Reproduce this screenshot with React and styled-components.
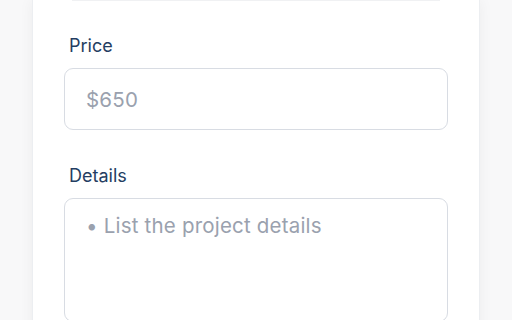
import React from 'react';
import styled, { createGlobalStyle } from 'styled-components';

const GlobalStyle = createGlobalStyle`
    html, body {
        margin: 0;
        padding: 0;
        background: #f8f8f9;
        font-family: Inter, "Noto Sans", "Liberation Sans", sans-serif;
    }
    * { box-sizing: border-box; }
`;

const Page = styled.div`
    padding: 0 32px;
    height: 320px;
    overflow: hidden;
`;

const Card = styled.div`
    background: #ffffff;
    border-left: 1px solid #eceef1;
    border-right: 1px solid #eceef1;
    box-shadow: 0 0 14px rgba(17, 24, 39, 0.05);
    padding: 0 31px 40px;
    min-height: 360px;
`;

const TopRule = styled.div`
    height: 1px;
    margin: 0 8px;
    background: #f0f1f3;
`;

const Form = styled.form`
    display: flex;
    flex-direction: column;
    gap: 34px;
    padding-top: 33px;
`;

const Field = styled.div`
    display: flex;
    flex-direction: column;
    gap: 10px;
`;

const Label = styled.label`
    margin-left: 5px;
    font-size: 18px;
    line-height: 24px;
    color: #243d62;
`;

const Input = styled.input`
    height: 62px;
    width: 100%;
    padding: 0 21px;
    border: 1px solid #d8dce3;
    border-radius: 9px;
    font-family: inherit;
    font-size: 20.5px;
    letter-spacing: 0.2px;
    color: #1f2937;
    background: #fff;
    outline: none;

    &::placeholder {
        color: #9aa1ae;
        opacity: 1;
    }
`;

const TextArea = styled.textarea`
    height: 124px;
    width: 100%;
    padding: 13px 21px;
    border: 1px solid #d8dce3;
    border-radius: 9px;
    font-family: inherit;
    font-size: 20.5px;
    letter-spacing: 0.2px;
    line-height: 28px;
    color: #1f2937;
    background: #fff;
    resize: none;
    outline: none;

    &::placeholder {
        color: #9aa1ae;
        opacity: 1;
    }
`;

export default function App() {
    return (
        <Page>
            <GlobalStyle />
            <Card>
                <TopRule />
                <Form>
                    <Field>
                        <Label htmlFor="price">Price</Label>
                        <Input id="price" placeholder="$650" />
                    </Field>
                    <Field>
                        <Label htmlFor="details">Details</Label>
                        <TextArea id="details" placeholder="• List the project details" />
                    </Field>
                </Form>
            </Card>
        </Page>
    );
}
